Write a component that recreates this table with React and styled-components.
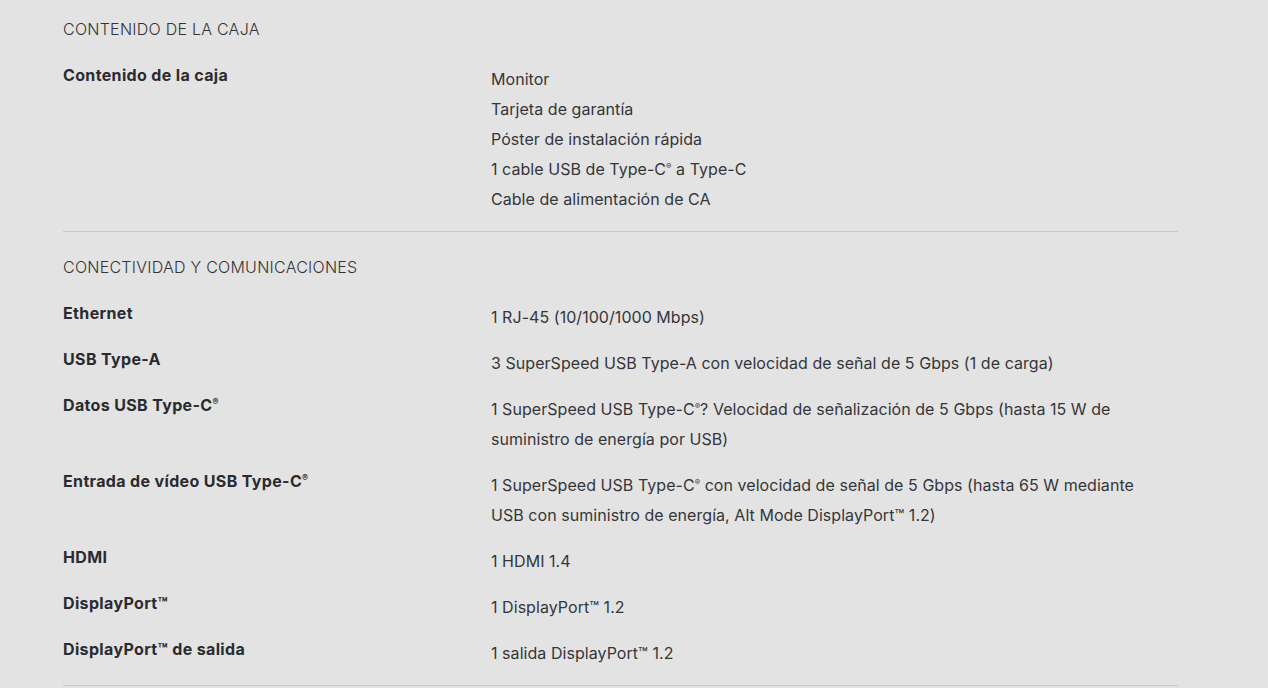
import styled, { createGlobalStyle } from 'styled-components';

const GlobalStyle = createGlobalStyle`
	html, body {
		margin: 0;
		padding: 0;
		background: #e3e3e3;
	}
	body {
		font-family: Inter, "Noto Sans", "Liberation Sans", sans-serif;
		color: #2e2f33;
	}
`;

const specs = [
	{
		title: 'CONTENIDO DE LA CAJA',
		rows: [
			{
				label: 'Contenido de la caja',
				values: [
					'Monitor',
					'Tarjeta de garantía',
					'Póster de instalación rápida',
					<>1 cable USB de Type-C<sup>®</sup> a Type-C</>,
					'Cable de alimentación de CA',
				],
			},
		],
	},
	{
		title: 'CONECTIVIDAD Y COMUNICACIONES',
		rows: [
			{ label: 'Ethernet', values: ['1 RJ-45 (10/100/1000 Mbps)'] },
			{ label: 'USB Type-A', values: ['3 SuperSpeed USB Type-A con velocidad de señal de 5 Gbps (1 de carga)'] },
			{
				label: <>Datos USB Type-C<sup>®</sup></>,
				values: [<>1 SuperSpeed USB Type-C<sup>®</sup>? Velocidad de señalización de 5 Gbps (hasta 15 W de suministro de energía por USB)</>],
			},
			{
				label: <>Entrada de vídeo USB Type-C<sup>®</sup></>,
				values: [<>1 SuperSpeed USB Type-C<sup>®</sup> con velocidad de señal de 5 Gbps (hasta 65 W mediante USB con suministro de energía, Alt Mode DisplayPort™ 1.2)</>],
			},
			{ label: 'HDMI', values: ['1 HDMI 1.4'] },
			{ label: 'DisplayPort™', values: ['1 DisplayPort™ 1.2'] },
			{ label: 'DisplayPort™ de salida', values: ['1 salida DisplayPort™ 1.2'] },
		],
	},
];

const Page = styled.div`
	width: 1115px;
	margin-left: 63px;
`;

const Section = styled.section`
	padding: 23px 0 18px;
	border-bottom: 1px solid #c9c9c9;
	&:first-child {
		padding-top: 17px;
	}
`;

const Heading = styled.h3`
	margin: 0 0 22px;
	font-size: 16px;
	line-height: 24px;
	font-weight: 300;
	letter-spacing: 0.25px;
	color: #333438;
`;

const Rows = styled.div`
	display: flex;
	flex-direction: column;
	gap: 16px;
`;

const Row = styled.div`
	display: grid;
	grid-template-columns: 428px 660px;
`;

const Label = styled.div`
	font-size: 16px;
	line-height: 24px;
	font-weight: 700;
	letter-spacing: 0.35px;
	color: #2a2b2f;
	sup {
		font-size: 9px;
		line-height: 0;
		vertical-align: 6px;
	}
`;

const Values = styled.ul`
	margin: 0;
	padding: 0;
	list-style: none;
`;

const Value = styled.li`
	font-size: 16px;
	line-height: 30px;
	font-weight: 400;
	letter-spacing: 0.05px;
	color: #35363a;
	padding-top: 1px;
	margin-bottom: -1px;
	sup {
		font-size: 8px;
		line-height: 0;
		vertical-align: 6px;
	}
`;

export default function App() {
	return (
		<>
			<GlobalStyle />
			<Page>
				{specs.map((section) => (
					<Section key={section.title}>
						<Heading>{section.title}</Heading>
						<Rows>
							{section.rows.map((row, i) => (
								<Row key={i}>
									<Label>{row.label}</Label>
									<Values>
										{row.values.map((v, j) => (
											<Value key={j}>{v}</Value>
										))}
									</Values>
								</Row>
							))}
						</Rows>
					</Section>
				))}
			</Page>
		</>
	);
}
